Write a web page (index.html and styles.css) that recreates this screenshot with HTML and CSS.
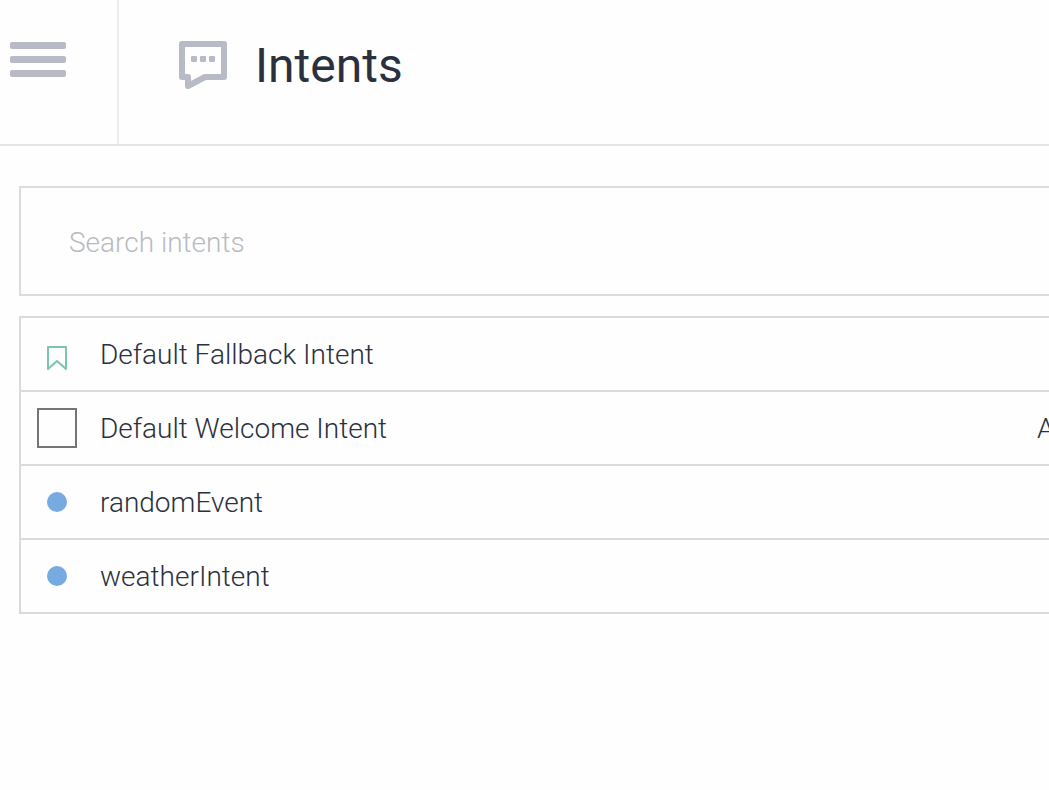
FILE: index.html
```html
<!DOCTYPE html>
<html lang="en">
<head>
<meta charset="utf-8">
<title>Intents</title>
<link rel="stylesheet" href="styles.css">
</head>
<body>
<header class="header">
  <button class="menu" type="button" aria-label="Menu">
    <svg width="56" height="36" viewBox="0 0 56 36" fill="#b8bac6">
      <rect width="56" height="7" rx="2"/>
      <rect y="14" width="56" height="7" rx="2"/>
      <rect y="28" width="56" height="7" rx="2"/>
    </svg>
  </button>
  <div class="heading">
    <svg class="chat" width="48" height="48" viewBox="0 0 48 48" fill="none" stroke="#b8bac6" stroke-width="6" stroke-linejoin="round" stroke-linecap="round">
      <path d="M3 3H45V36H26L9 45V36H3Z"/>
      <g fill="#b8bac6" stroke="none">
        <rect x="12" y="15" width="6" height="6" rx="1"/>
        <rect x="21" y="15" width="6" height="6" rx="1"/>
        <rect x="30" y="15" width="6" height="6" rx="1"/>
      </g>
    </svg>
    <h1 class="title">Intents</h1>
  </div>
</header>
<main class="content">
  <input class="search" type="text" placeholder="Search intents" aria-label="Search intents">
  <ul class="list">
    <li class="row">
      <span class="marker">
        <svg class="bookmark" width="20" height="24" viewBox="0 0 20 24" fill="none" stroke="#7cc4ae" stroke-width="2" stroke-linejoin="round"><path d="M1 1H19V23L10 15L1 23Z"/></svg>
      </span>
      <span class="name">Default Fallback Intent</span>
    </li>
    <li class="row">
      <span class="marker"><input class="check" type="checkbox" id="welcome"></span>
      <label class="name" for="welcome">Default Welcome Intent</label>
      <a class="action" href="#">A</a>
    </li>
    <li class="row">
      <span class="marker"><span class="dot"></span></span>
      <span class="name">randomEvent</span>
    </li>
    <li class="row">
      <span class="marker"><span class="dot"></span></span>
      <span class="name">weatherIntent</span>
    </li>
  </ul>
</main>
</body>
</html>
```
FILE: styles.css
```css
* {
  box-sizing: border-box;
}

body {
  margin: 0;
  background: #fefefe;
  color: #2b303f;
  font-family: Roboto, "Liberation Sans", sans-serif;
  font-size: 28px;
  font-weight: 300;
}

.header {
  display: flex;
  border-bottom: 2px solid #e5e5e5;
}

.menu {
  display: flex;
  align-items: flex-start;
  width: 119px;
  padding: 42px 10px 0;
  border: 0;
  border-right: 2px solid #ececec;
  background: none;
}

.heading {
  display: flex;
  align-items: center;
  gap: 28px;
  padding: 37px 60px 51px;
}

.chat {
  flex: none;
}

.title {
  margin: 0;
  padding-top: 2px;
  font-size: 48px;
  font-weight: 400;
  line-height: 54px;
}

.content {
  display: flex;
  flex-direction: column;
  gap: 20px;
  padding: 40px 0 40px 19px;
}

.search {
  width: 100%;
  padding: 38px 48px 34px;
  border: 2px solid #dcdcdc;
  border-right: 0;
  border-radius: 0;
  background: none;
  color: inherit;
  font: inherit;
  line-height: 34px;
}

.search::placeholder {
  color: #b9bbc1;
  opacity: 1;
}

.list {
  margin: 0;
  padding: 0;
  border: 2px solid #dadada;
  border-right: 0;
  list-style: none;
}

.row {
  display: flex;
  align-items: center;
  padding-left: 16px;
  line-height: 70px;
}

.row + .row {
  border-top: 2px solid #dadada;
}

.marker {
  display: flex;
  justify-content: center;
  flex: none;
  width: 40px;
  margin-right: 23px;
}

.bookmark {
  margin-top: 8px;
}

.check {
  appearance: none;
  width: 40px;
  height: 40px;
  margin: 0;
  border: 2px solid #757575;
}

.dot {
  width: 20px;
  height: 20px;
  border-radius: 50%;
  background: #78aae2;
}

.name {
  flex: 1;
  padding-top: 2px;
}

.action {
  flex: none;
  width: 12px;
  padding-top: 2px;
  overflow: hidden;
  color: inherit;
  text-decoration: none;
}
```
